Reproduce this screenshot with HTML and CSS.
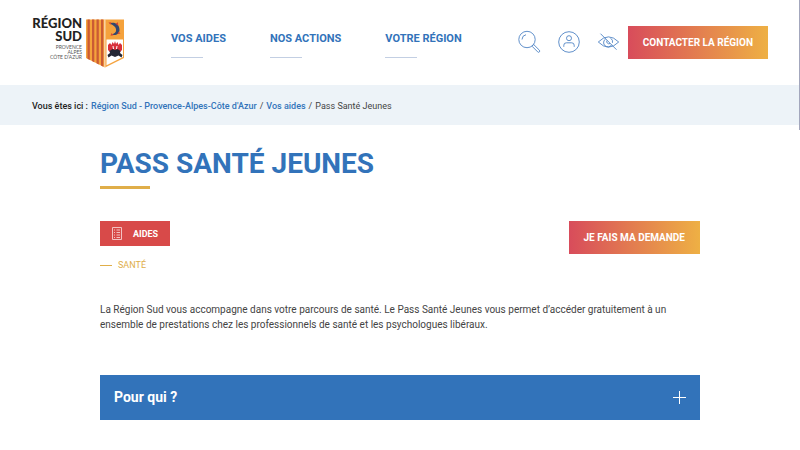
FILE: index.html
```html
<!DOCTYPE html>
<html lang="fr">
<head>
  <meta charset="utf-8">
  <meta name="viewport" content="width=device-width, initial-scale=1">
  <title>Pass Santé Jeunes</title>
  <link rel="stylesheet" href="styles.css">
</head>
<body>
  <header class="header">
    <a href="#" class="logo" aria-label="Région Sud">
      <svg width="94" height="56" viewBox="0 -6 94 56">
        <g text-anchor="end">
          <text class="logo-name" x="51" y="10">RÉGION</text>
          <text class="logo-name" x="51" y="23">SUD</text>
          <text class="logo-area" x="51" y="31">PROVENCE</text>
          <text class="logo-area" x="51" y="36">ALPES</text>
          <text class="logo-area" x="51" y="41">CÔTE D’AZUR</text>
        </g>
        <path fill="#f5a23c" d="M55 1.500H93V40L74 49.500L55 40Z"/>
        <path fill="#cb5a34" d="M56.500 1.500h2.300v40.400l-2.300-1.200zM61 1.500h2.300v42.700l-2.300-1.200zM65.500 1.500h2.300v44.900l-2.300-1.200zM70 1.500h2.300v47.200l-2.300-1.200z"/>
        <path fill="#fff" d="M73.500 1.500h.8v47.700l-.8-.4z"/>
        <path fill="#fff" d="M75.500 21.500H92V39L75.500 47.200z"/>
        <path fill="#34476e" d="M78.500 5.500C83 3.500 88.500 6 88.500 12c0 4-4 6-8 4.500 3-.7 4.800-2.200 4.600-4.700C85 9 82.500 7.200 78.500 5.500z"/>
        <path fill="#d64333" d="M77.500 4.500l3-.2-1 2.500zM84.500 5.800l2.500-1.500.2 3.500zM79.500 17.800l1-2.800 2 2.300zM87.500 13.500l2 2-3 .5z"/>
        <path fill="#d8303b" d="M77 27l2-2 1.500 2 1-3 1.500 2 1-3 1 3 1.500-2 1 3 1.500-2 2 2v5l-2 2H79l-2-2z"/>
        <path fill="#252733" d="M78.500 33l3-2 2.500 1 2.500-1 3 2-.5 2 2.500 2-1 2.500-3-2-3.500 1.500-3.500-1.500-3 2-1-2.500 2.500-2z"/>
        <path fill="#fff" d="M81.500 28h1l.5 3h-1zM85.500 28h1l-.5 3h-1z"/>
      </svg>
    </a>
    <nav class="nav">
      <a href="#">VOS AIDES</a>
      <a href="#">NOS ACTIONS</a>
      <a href="#">VOTRE RÉGION</a>
    </nav>
    <div class="tools">
      <button type="button" class="tool" aria-label="Rechercher">
        <svg width="24" height="24" viewBox="0 0 24 24">
          <circle cx="10" cy="9.500" r="8.200"/>
          <path d="M5 9.500a5 5 0 0 1 4-4.800M15 16.200l1.700-1.700 5.700 5.700q.8.800 0 1.700t-1.700 0z"/>
        </svg>
      </button>
      <button type="button" class="tool" aria-label="Mon compte">
        <svg width="24" height="24" viewBox="0 0 24 24">
          <circle cx="12" cy="12" r="10.300"/>
          <circle cx="12" cy="8.200" r="2.500"/>
          <path d="M6.800 16.800v-1.500q0-2.500 2.500-2.500h5.400q2.500 0 2.500 2.500v1.500"/>
        </svg>
      </button>
      <button type="button" class="tool" aria-label="Accessibilité">
        <svg width="24" height="24" viewBox="0 0 24 24">
          <path d="M1.300 12Q11.500 1.700 21.700 12Q11.500 22.300 1.300 12zM3.500 3.700l16 16M8.700 8.900a4.300 4.300 0 1 0 5.900 5.900M13.700 8.300a4.300 4.300 0 0 1 1.800 4.500"/>
          <path d="M10 10.500a2.200 2.200 0 0 0 3 3"/>
        </svg>
      </button>
    </div>
    <a href="#" class="button">CONTACTER LA RÉGION</a>
  </header>

  <nav class="breadcrumb" aria-label="Fil d'Ariane">
    <strong>Vous êtes ici :</strong>
    <a href="#">Région Sud - Provence-Alpes-Côte d'Azur</a>
    <span>/</span>
    <a href="#">Vos aides</a>
    <span>/</span>
    <span>Pass Santé Jeunes</span>
  </nav>

  <main class="content">
    <h1>PASS SANTÉ JEUNES</h1>
    <div class="summary">
      <div>
        <div class="tag">
          <svg width="10" height="13" viewBox="0 0 10 13">
            <path d="M.5.500h9v12h-9zM2 3h1M4.500 3H8M2 5.500h1M4.500 5.500H8M2 8h1M4.500 8H8M2 10.500h1M4.500 10.500H8"/>
          </svg>
          AIDES
        </div>
        <div class="theme">SANTÉ</div>
      </div>
      <a href="#" class="button">JE FAIS MA DEMANDE</a>
    </div>
    <p>La Région Sud vous accompagne dans votre parcours de santé. Le Pass Santé Jeunes vous permet d’accéder gratuitement à un ensemble de prestations chez les professionnels de santé et les psychologues libéraux.</p>
    <button type="button" class="accordion" aria-expanded="false">
      Pour qui ?
      <svg width="13" height="13" viewBox="0 0 13 13"><path d="M6.500 0v13M0 6.500h13"/></svg>
    </button>
  </main>
  <div class="scroll-mark"></div>
</body>
</html>
```

FILE: styles.css
```css
* {
  box-sizing: border-box;
}
body {
  margin: 0;
  font-family: Roboto, sans-serif;
  font-size: 10px;
  color: #444;
  background: #fff;
}
a {
  color: #3273ba;
  text-decoration: none;
}
svg {
  display: block;
}
.header {
  display: flex;
  align-items: center;
  padding: 12px 32px 17px 31px;
}
.logo-name {
  font-family: Lato, sans-serif;
  font-size: 13px;
  font-weight: 900;
  fill: #222;
}
.logo-area {
  font-family: Lato, sans-serif;
  font-size: 5px;
  fill: #555;
}
.nav {
  display: flex;
  gap: 44px;
  margin-left: 46px;
  padding-top: 10px;
}
.nav a {
  font-size: 11px;
  line-height: 14px;
  font-weight: 700;
}
.nav a::after {
  content: "";
  display: block;
  width: 32px;
  height: 1px;
  margin-top: 11px;
  background: #c3cfe3;
}
.tools {
  display: flex;
  gap: 16px;
  margin-left: auto;
  margin-right: 7px;
  padding-top: 4px;
}
.tool {
  padding: 0;
  border: 0;
  background: none;
  cursor: pointer;
}
.tool svg {
  fill: none;
  stroke: #4f83c4;
  stroke-width: 0.9;
}
.button {
  padding: 0 15px;
  font-size: 10px;
  line-height: 33px;
  font-weight: 700;
  color: #fff;
  background: linear-gradient(90deg, #d84c5b, #eeb044);
}
.header .button {
  margin-top: 4px;
}
.breadcrumb {
  display: flex;
  gap: 3px;
  padding: 2px 32px 0;
  font-size: 9px;
  line-height: 38px;
  background: #edf3f8;
}
.breadcrumb strong {
  font-weight: 500;
  color: #222;
}
.breadcrumb a {
  font-weight: 500;
}
.content {
  width: 75%;
  margin: 0 auto;
  padding: 21px 0 30px;
}
h1 {
  margin: 0;
  font-size: 28px;
  line-height: 36px;
  font-weight: 700;
  color: #3273ba;
}
h1::after {
  content: "";
  display: block;
  width: 50px;
  height: 3px;
  margin-top: 4px;
  background: #e0ae49;
}
.summary {
  display: flex;
  justify-content: space-between;
  align-items: flex-start;
  margin-top: 32px;
}
.tag {
  display: flex;
  align-items: center;
  gap: 11px;
  height: 25px;
  padding: 0 12px;
  font-size: 9px;
  font-weight: 700;
  color: #fff;
  background: #d84a49;
}
.tag svg {
  fill: none;
  stroke: #f3c2c2;
}
.theme {
  display: flex;
  align-items: center;
  gap: 6px;
  margin-top: 12px;
  font-size: 9px;
  line-height: 14px;
  color: #e0ae49;
}
.theme::before {
  content: "";
  width: 12px;
  height: 1px;
  background: #e0ae49;
}
p {
  margin: 30px 0 0;
  font-size: 10px;
  line-height: 15px;
}
.accordion {
  display: flex;
  justify-content: space-between;
  align-items: center;
  width: 100%;
  margin-top: 43px;
  padding: 0 14px;
  border: 0;
  font-family: inherit;
  font-size: 14px;
  line-height: 45px;
  font-weight: 700;
  color: #fff;
  background: #3273ba;
  cursor: pointer;
}
.accordion svg {
  stroke: #fff;
}
.scroll-mark {
  position: fixed;
  top: 0;
  right: 0;
  width: 1px;
  height: 130px;
  background: #a3a7bd;
}
```
